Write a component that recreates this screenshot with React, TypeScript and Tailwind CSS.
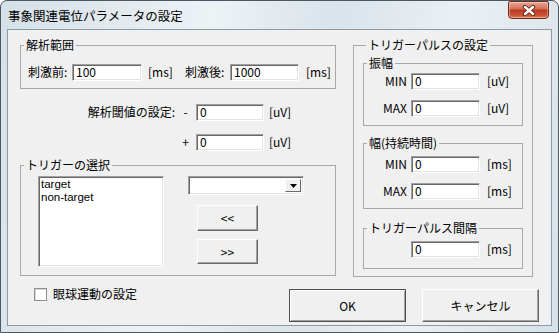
import type { ReactNode } from 'react'

const font = "font-['Noto_Sans_CJK_JP','Liberation_Sans',sans-serif]"

function Edit({ value, className = '' }: { value: string; className?: string }) {
  return (
    <div
      className={`h-[17px] bg-white border border-t-[#a0a0a0] border-l-[#a0a0a0] border-b-white border-r-white shadow-[inset_1px_1px_0_#696969,inset_-1px_-1px_0_#e3e3e3] pl-[3px] text-[12px] leading-[14px] ${className}`}
    >
      {value}
    </div>
  )
}

function GroupBox({ label, className = '', children }: { label: string; className?: string; children: ReactNode }) {
  return (
    <fieldset className={`border border-[#a8a8a8] ${className}`}>
      <legend className="ml-[3px] px-[2px] text-[12px] leading-[14px]">{label}</legend>
      {children}
    </fieldset>
  )
}

function RaisedButton({ children, className = '' }: { children: ReactNode; className?: string }) {
  return (
    <button
      className={`flex items-center justify-center bg-[#f0f0f0] border border-t-white border-l-white border-r-[#696969] border-b-[#696969] shadow-[inset_-1px_-1px_0_#a0a0a0] text-[12px] ${className}`}
    >
      {children}
    </button>
  )
}

function RangeRow({ label, unit, className = '' }: { label: string; unit: string; className?: string }) {
  return (
    <div className={`flex items-center text-[12px] ${className}`}>
      <span className="w-[43px] text-right">{label}</span>
      <Edit value="0" className="ml-[4px] w-[69px]" />
      <span className="ml-[7px]">{unit}</span>
    </div>
  )
}

export default function App() {
  return (
    <div
      className={`${font} w-[559px] h-[333px] flex flex-col text-black rounded-t-[7px] border border-[#4a5864] bg-[linear-gradient(100deg,#d5e0e8_0%,#edf2f5_35%,#d9e3ea_55%,#eaf0f3_75%,#d6e1e9_100%)]`}
    >
      {/* Title bar */}
      <div className="h-[28px] flex items-start">
        <span className="pl-[7px] pt-[7px] text-[12.5px] leading-[16px]">事象関連電位パラメータの設定</span>
        <div className="ml-auto mr-[9px] w-[41px] h-[18px] rounded-b-[4px] rounded-t-[2px] border border-[#6e2a1c] bg-[linear-gradient(#eaa898,#d8735c_40%,#bc3a20_52%,#c9502f_80%,#e07a55)] flex items-center justify-center shadow-[inset_0_0_0_1px_rgba(255,255,255,0.35)]">
          <svg width="14" height="11" viewBox="0 0 14 11">
            <path d="M3 2 L11 9 M11 2 L3 9" stroke="#5a2318" strokeWidth="4.2" strokeLinecap="round" />
            <path d="M3 2 L11 9 M11 2 L3 9" stroke="#ffffff" strokeWidth="2.4" strokeLinecap="round" />
          </svg>
        </div>
      </div>

      {/* Client area */}
      <div className="flex-1 mx-[6px] mb-[6px] border border-[#8d9ba6] bg-[#f0f0f0] flex flex-col">
        <div className="flex pt-[8px] pl-[12px] pr-[18px]">
          {/* Left column */}
          <div className="w-[316px] flex flex-col">
            <GroupBox label="解析範囲" className="pt-[11px] pb-[7px]">
              <div className="flex items-center text-[12px] pl-[7px]">
                <span className="w-[44px]">刺激前:</span>
                <Edit value="100" className="w-[70px]" />
                <span className="ml-[6px] w-[37px]">[ms]</span>
                <span className="w-[45px]">刺激後:</span>
                <Edit value="1000" className="w-[69px]" />
                <span className="ml-[7px]">[ms]</span>
              </div>
            </GroupBox>

            <div className="mt-[14px] flex items-center text-[12px]">
              <span className="w-[155px] text-right">解析閾値の設定:</span>
              <span className="w-[21px] text-center">-</span>
              <Edit value="0" className="w-[68px]" />
              <span className="ml-[5px]">[uV]</span>
            </div>
            <div className="mt-[12px] flex items-center text-[12px]">
              <span className="w-[155px]" />
              <span className="w-[21px] text-center">+</span>
              <Edit value="0" className="w-[68px]" />
              <span className="ml-[5px]">[uV]</span>
            </div>

            <GroupBox label="トリガーの選択" className="mt-[7px] pt-[4px] pb-[8px]">
              <div className="flex pl-[17px]">
                <div className="w-[126px] h-[91px] bg-white border border-t-[#a0a0a0] border-l-[#a0a0a0] border-b-white border-r-white shadow-[inset_1px_1px_0_#696969,inset_-1px_-1px_0_#e3e3e3] px-[2px] pt-px font-['Liberation_Sans',sans-serif] text-[11.5px] leading-[13px]">
                  <div>target</div>
                  <div>non-target</div>
                </div>
                <div className="ml-[24px] flex flex-col">
                  <div className="w-[116px] h-[19px] bg-white border border-t-[#a0a0a0] border-l-[#a0a0a0] border-b-white border-r-white shadow-[inset_1px_1px_0_#696969,inset_-1px_-1px_0_#e3e3e3] flex justify-end p-[2px]">
                    <div className="w-[16px] h-full bg-[#f0f0f0] border border-t-white border-l-white border-r-[#696969] border-b-[#696969] flex items-center justify-center">
                      <svg width="7" height="4" viewBox="0 0 7 4">
                        <path d="M0 0 H7 L3.5 4 Z" fill="#000" />
                      </svg>
                    </div>
                  </div>
                  <RaisedButton className="mt-[10px] ml-[9px] w-[61px] h-[26px]">&lt;&lt;</RaisedButton>
                  <RaisedButton className="mt-[8px] ml-[9px] w-[61px] h-[25px]">&gt;&gt;</RaisedButton>
                </div>
              </div>
            </GroupBox>
          </div>

          {/* Right column */}
          <GroupBox label="トリガーパルスの設定" className="ml-[17px] w-[180px] pt-[4px] pl-[9px] pr-[9px] pb-[7px] self-start">
            <GroupBox label="振幅" className="pt-[2px] pb-[8px]">
              <RangeRow label="MIN" unit="[uV]" />
              <RangeRow label="MAX" unit="[uV]" className="mt-[9px]" />
            </GroupBox>
            <GroupBox label="幅(持続時間)" className="mt-[10px] pt-[5px] pb-[8px]">
              <RangeRow label="MIN" unit="[ms]" />
              <RangeRow label="MAX" unit="[ms]" className="mt-[9px]" />
            </GroupBox>
            <GroupBox label="トリガーパルス間隔" className="mt-[12px] pt-[5px] pb-[10px]">
              <RangeRow label="" unit="[ms]" />
            </GroupBox>
          </GroupBox>
        </div>

        {/* Bottom row */}
        <div className="flex items-start mt-[12px] pl-[26px] pr-[12px]">
          <label className="flex items-center -mt-[3px] text-[12px] leading-[16px]">
            <span className="w-[13px] h-[13px] bg-white border border-[#8f8f8f] shadow-[inset_1px_1px_0_#d8d8d8]" />
            <span className="ml-[6px]">眼球運動の設定</span>
          </label>
          <button className="ml-auto w-[117px] h-[33px] bg-[#f0f0f0] border border-[#4f4f4f] shadow-[inset_1px_1px_0_#fff,inset_-1px_-1px_0_#a0a0a0] text-[12px]">
            OK
          </button>
          <RaisedButton className="ml-[16px] w-[117px] h-[33px]">キャンセル</RaisedButton>
        </div>
      </div>
    </div>
  )
}
